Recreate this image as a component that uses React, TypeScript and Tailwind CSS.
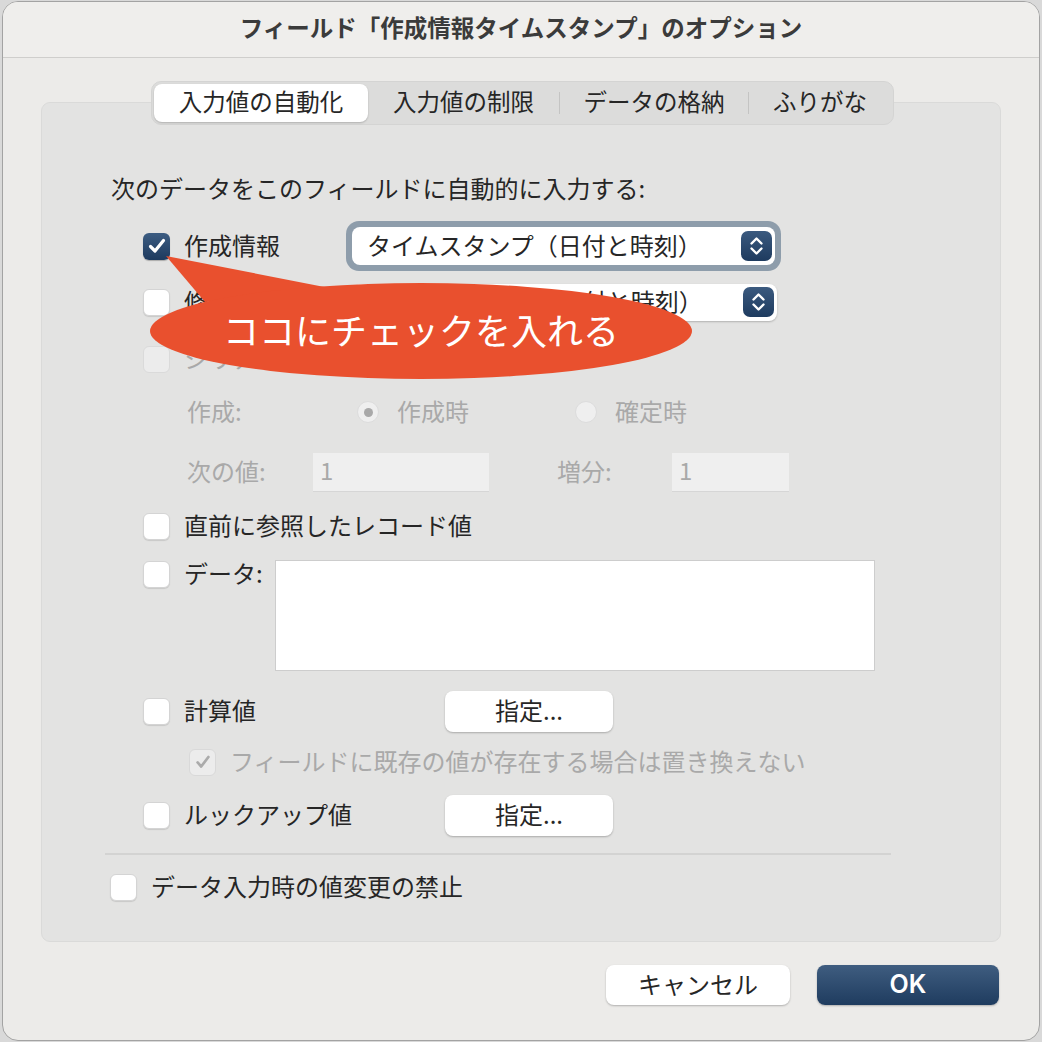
import React from "react";

const FONT = { fontFamily: '"Noto Sans CJK JP", "Noto Sans", sans-serif' };

function Check({ checked = false, disabled = false }: { checked?: boolean; disabled?: boolean }) {
  if (checked && !disabled) {
    return (
      <div className="w-[27px] h-[27px] shrink-0 rounded-[6px] bg-gradient-to-b from-[#3d5d82] to-[#1d3a5e] flex items-center justify-center shadow-[0_1px_1px_rgba(0,0,0,0.25)]">
        <svg width="20" height="20" viewBox="0 0 20 20">
          <path d="M3.5 10.5 L8 15 L16.5 4.5" fill="none" stroke="white" strokeWidth="3.2" strokeLinecap="round" strokeLinejoin="round" />
        </svg>
      </div>
    );
  }
  if (checked && disabled) {
    return (
      <div className="w-[27px] h-[27px] shrink-0 rounded-[6px] bg-[#ececec] border border-[#d9d9d9] flex items-center justify-center">
        <svg width="18" height="18" viewBox="0 0 20 20">
          <path d="M4 10.5 L8 15 L16 4.5" fill="none" stroke="#ababab" strokeWidth="3" strokeLinecap="round" strokeLinejoin="round" />
        </svg>
      </div>
    );
  }
  if (disabled) {
    return <div className="w-[27px] h-[27px] shrink-0 rounded-[6px] bg-[#ececec] border border-[#dadada]" />;
  }
  return (
    <div className="w-[27px] h-[27px] shrink-0 rounded-[6px] bg-white border border-[#d4d4d4] shadow-[0_1px_1px_rgba(0,0,0,0.12)]" />
  );
}

function Stepper() {
  return (
    <div className="w-[31px] h-[30px] rounded-[7px] bg-gradient-to-b from-[#3b5a7f] to-[#1e3b5f] flex items-center justify-center">
      <svg width="31" height="30" viewBox="0 0 31 30">
        <path d="M10.5 12.5 L15.5 7.5 L20.5 12.5" fill="none" stroke="white" strokeWidth="2.4" strokeLinecap="round" strokeLinejoin="round" />
        <path d="M10.5 17.5 L15.5 22.5 L20.5 17.5" fill="none" stroke="white" strokeWidth="2.4" strokeLinecap="round" strokeLinejoin="round" />
      </svg>
    </div>
  );
}

function Radio({ on }: { on?: boolean }) {
  return (
    <div className="w-[22px] h-[22px] rounded-full bg-[#efefef] border border-[#dcdcdc] flex items-center justify-center">
      {on && <div className="w-[9px] h-[9px] rounded-full bg-[#a9a9a9]" />}
    </div>
  );
}

function SpecButton() {
  return (
    <div className="w-[168px] h-[41px] pb-[3px] rounded-[8px] bg-white shadow-[0_1px_2px_rgba(0,0,0,0.25)] flex items-center justify-center text-[24px] text-[#262626]">
      指定...
    </div>
  );
}

export default function App() {
  return (
    <div className="relative w-[1042px] h-[1042px] bg-[#d9d9d9] pt-[1px] pl-[2px] overflow-hidden" style={FONT}>
      <div className="w-[1038px] h-[1040px] rounded-[16px] border border-[#a3a3a3] bg-[#ecebe9] overflow-hidden flex flex-col">
        {/* title bar */}
        <div className="h-[56px] pb-[3px] shrink-0 bg-[#efeeec] border-b border-[#cfcecc] flex items-center justify-center">
          <span className="text-[23.5px] font-bold text-[#3b3b3b]">フィールド「作成情報タイムスタンプ」のオプション</span>
        </div>
        {/* body */}
        <div className="pt-[44px] px-[38px]">
          <div className="h-[840px] rounded-[9px] bg-[#e3e3e2] border border-[#dadad9] text-[#262626]">
            {/* tabs */}
            <div className="flex justify-center -mt-[22px] pl-[3px]">
              <div className="h-[44px] w-[743px] rounded-[10px] bg-[#dcdcdb] border border-[#d4d4d3] p-[2px] flex items-stretch text-[23.5px]">
                <div className="w-[214px] pb-[3px] rounded-[8px] bg-white shadow-[0_1px_2px_rgba(0,0,0,0.2)] flex items-center justify-center">入力値の自動化</div>
                <div className="w-[192px] flex items-center justify-center">
                  <span className="flex-1 text-center pb-[3px]">入力値の制限</span>
                  <span className="w-[1px] h-[22px] bg-[#c4c4c3]" />
                </div>
                <div className="w-[189px] flex items-center justify-center">
                  <span className="flex-1 text-center pb-[3px]">データの格納</span>
                  <span className="w-[1px] h-[22px] bg-[#c4c4c3]" />
                </div>
                <div className="flex-1 pb-[3px] flex items-center justify-center">ふりがな</div>
              </div>
            </div>

            <div className="text-[24px]">
              {/* heading */}
              <div className="mt-[49px] h-[30px] pb-[3px] pl-[69px] flex items-center">次のデータをこのフィールドに自動的に入力する:</div>

              {/* row 1 */}
              <div className="mt-[17px] h-[50px] pl-[101px] flex items-center">
                <Check checked />
                <span className="ml-[14px] w-[162px] pb-[3px]">作成情報</span>
                <div className="w-[435px] h-[50px] rounded-[13px] bg-[#8e9dab] p-[6px]">
                  <div className="h-full rounded-[8px] bg-white flex items-center justify-between pl-[15px] pr-[3px]">
                    <span className="pb-[3px]">タイムスタンプ（日付と時刻）</span>
                    <Stepper />
                  </div>
                </div>
              </div>

              {/* row 2 */}
              <div className="mt-[6px] h-[50px] pl-[101px] flex items-center">
                <Check />
                <span className="ml-[14px] w-[169px] pb-[3px]">修正情報</span>
                <div className="w-[424px] h-[37px] rounded-[8px] bg-white shadow-[0_1px_2px_rgba(0,0,0,0.22)] flex items-center justify-between pl-[15px] pr-[3px]">
                  <span className="pb-[3px]">タイムスタンプ（日付と時刻）</span>
                  <Stepper />
                </div>
              </div>

              {/* row 3 */}
              <div className="mt-[7px] h-[50px] pl-[101px] flex items-center text-[#a9a9a9]">
                <Check disabled />
                <span className="ml-[14px] pb-[3px]">シリアル番号</span>
              </div>

              {/* row 4 radios */}
              <div className="mt-[3px] h-[50px] pl-[145px] flex items-center text-[#a9a9a9]">
                <span className="w-[170px] pb-[3px]">作成:</span>
                <Radio on />
                <span className="ml-[18px] w-[178px] pb-[3px]">作成時</span>
                <Radio />
                <span className="ml-[18px] pb-[3px]">確定時</span>
              </div>

              {/* row 5 inputs */}
              <div className="mt-[10px] h-[50px] pl-[145px] flex items-center text-[#a9a9a9]">
                <span className="w-[126px] pb-[3px]">次の値:</span>
                <div className="w-[176px] h-[39px] pb-[3px] bg-[#efefef] border-b border-[#d6d6d6] flex items-center pl-[7px]">1</div>
                <span className="ml-[68px] w-[115px] pb-[3px]">増分:</span>
                <div className="w-[117px] h-[39px] pb-[3px] bg-[#efefef] border-b border-[#d6d6d6] flex items-center pl-[7px]">1</div>
              </div>

              {/* row 6 */}
              <div className="mt-[4px] h-[50px] pl-[101px] flex items-center">
                <Check />
                <span className="ml-[14px] pb-[3px]">直前に参照したレコード値</span>
              </div>

              {/* row 7 data */}
              <div className="mt-[9px] pl-[101px] flex items-start">
                <div className="mt-[1px]"><Check /></div>
                <span className="ml-[14px] w-[91px] h-[29px] pb-[3px] flex items-center">データ:</span>
                <div className="w-[600px] h-[111px] bg-white border border-[#cdcdcd]" />
              </div>

              {/* row 8 calc */}
              <div className="mt-[15px] h-[50px] pl-[101px] flex items-center">
                <Check />
                <span className="ml-[14px] w-[261px] pb-[3px]">計算値</span>
                <SpecButton />
              </div>

              {/* row 9 disabled checked */}
              <div className="mt-[1px] h-[50px] pl-[147px] flex items-center text-[#a9a9a9]">
                <Check checked disabled />
                <span className="ml-[14px] pb-[3px]">フィールドに既存の値が存在する場合は置き換えない</span>
              </div>

              {/* row 10 lookup */}
              <div className="mt-[3px] h-[50px] pl-[101px] flex items-center">
                <Check />
                <span className="ml-[14px] w-[261px] pb-[3px]">ルックアップ値</span>
                <SpecButton />
              </div>

              {/* separator */}
              <div className="mt-[13px] ml-[63px] w-[786px] h-[2px] bg-[#d3d3d2]" />

              {/* row 11 */}
              <div className="mt-[7px] h-[50px] pl-[68px] flex items-center">
                <Check />
                <span className="ml-[14px] pb-[3px]">データ入力時の値変更の禁止</span>
              </div>
            </div>
          </div>

          {/* footer */}
          <div className="mt-[23px] flex justify-end gap-[27px] pr-[2px]">
            <div className="w-[184px] h-[40px] pb-[3px] rounded-[8px] bg-white shadow-[0_1px_2px_rgba(0,0,0,0.25)] flex items-center justify-center text-[24px] text-[#262626]">
              キャンセル
            </div>
            <div className="w-[182px] h-[40px] pb-[1px] rounded-[8px] bg-gradient-to-b from-[#3f5d80] to-[#1f3c5f] shadow-[0_1px_2px_rgba(0,0,0,0.25)] flex items-center justify-center text-[25px] font-semibold text-white" style={{ fontFamily: 'Inter, "Liberation Sans", sans-serif' }}>
              OK
            </div>
          </div>
        </div>
      </div>

      {/* callout bubble */}
      <svg className="absolute left-0 top-0 pointer-events-none" width="1042" height="1042" viewBox="0 0 1042 1042">
        <polygon points="166,256 350,292 205,302" fill="#e9502e" />
        <ellipse cx="421" cy="331" rx="271" ry="48" fill="#e9502e" />
      </svg>
      <div className="absolute left-[150px] top-[283px] w-[542px] h-[96px] pb-[4px] flex items-center justify-center text-white text-[36px]">
        ココにチェックを入れる
      </div>
    </div>
  );
}
